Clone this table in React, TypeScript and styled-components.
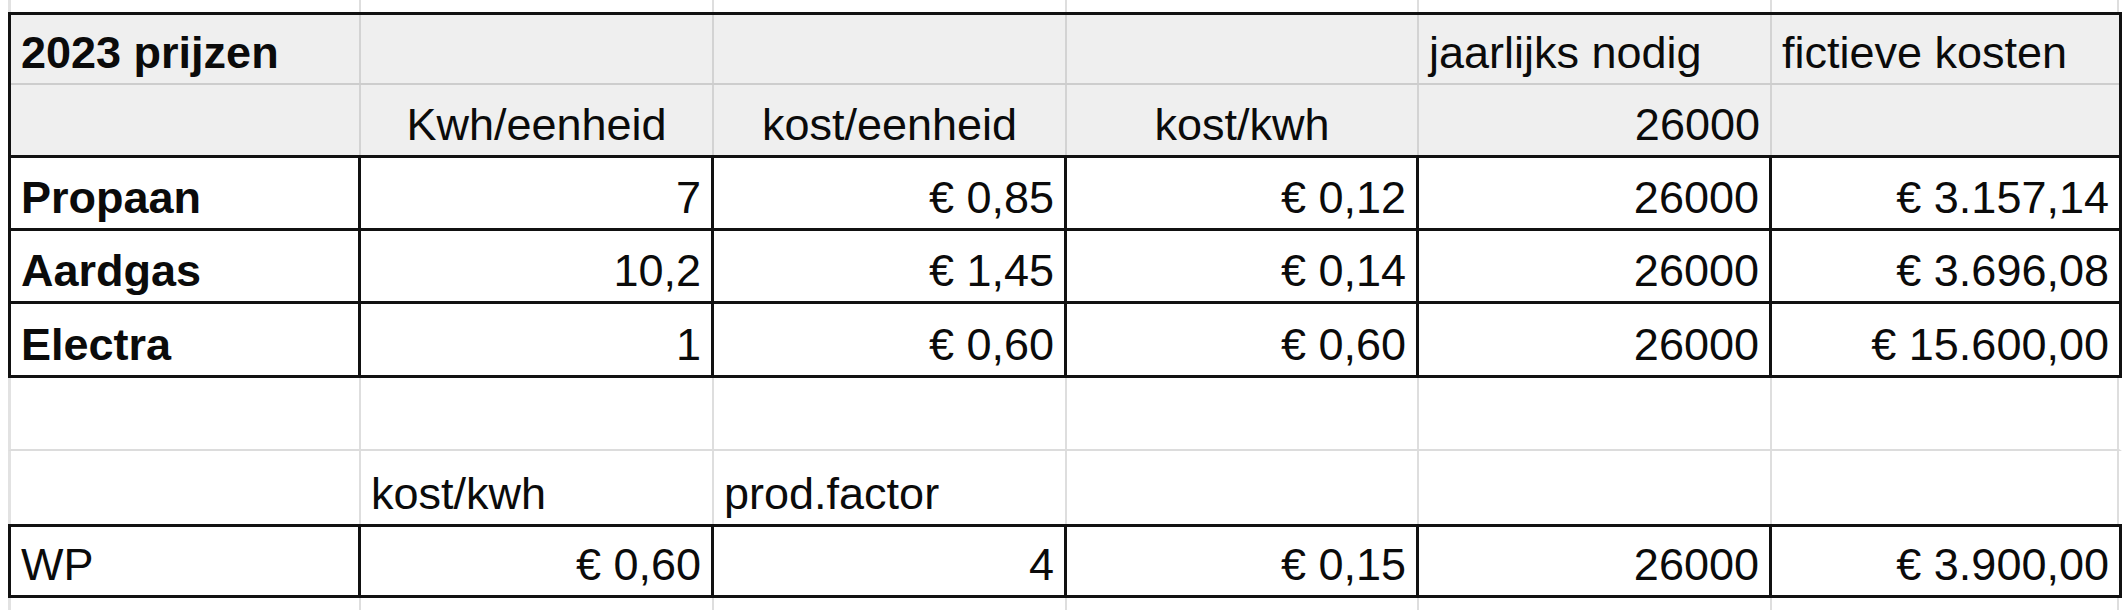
import styled, { createGlobalStyle } from "styled-components";

type Align = "left" | "center" | "right";
type Tone = "header" | "body" | "plain";
type Divider = "soft" | "hard" | "grid" | "none";

type CellData = { text?: string; align?: Align; bold?: boolean };

// column widths include each cell's right border, so lines land on the sheet grid
const COLUMNS = "350px 353px 353px 352px 353px 347px";

const headerRows: CellData[][] = [
  [
    { text: "2023 prijzen", bold: true },
    {},
    {},
    {},
    { text: "jaarlijks nodig" },
    { text: "fictieve kosten" },
  ],
  [
    {},
    { text: "Kwh/eenheid", align: "center" },
    { text: "kost/eenheid", align: "center" },
    { text: "kost/kwh", align: "center" },
    { text: "26000", align: "right" },
    {},
  ],
];

const fuels = [
  { name: "Propaan", perUnit: "7", unitCost: "€ 0,85", kwhCost: "€ 0,12", need: "26000", total: "€ 3.157,14" },
  { name: "Aardgas", perUnit: "10,2", unitCost: "€ 1,45", kwhCost: "€ 0,14", need: "26000", total: "€ 3.696,08" },
  { name: "Electra", perUnit: "1", unitCost: "€ 0,60", kwhCost: "€ 0,60", need: "26000", total: "€ 15.600,00" },
];

const blankRow: CellData[] = [{}, {}, {}, {}, {}, {}];

const pumpLabels: CellData[] = [{}, { text: "kost/kwh" }, { text: "prod.factor" }, {}, {}, {}];

const pumpRow: CellData[] = [
  { text: "WP" },
  { text: "€ 0,60", align: "right" },
  { text: "4", align: "right" },
  { text: "€ 0,15", align: "right" },
  { text: "26000", align: "right" },
  { text: "€ 3.900,00", align: "right" },
];

const justify: Record<Align, string> = {
  left: "flex-start",
  center: "center",
  right: "flex-end",
};

const dividers: Record<Divider, string> = {
  soft: "2px solid #cdcdcd",
  hard: "3px solid #111111",
  grid: "2px solid #dcdcdc",
  none: "0",
};

const cellLines: Record<Tone, string> = {
  header: "2px solid #d3d3d3",
  body: "3px solid #111111",
  plain: "2px solid #dedede",
};

const GlobalStyle = createGlobalStyle`
  html, body {
    margin: 0;
    padding: 0;
    background: #ffffff;
  }
  body {
    font-family: "Liberation Sans", Arial, sans-serif;
    color: #0b0b0b;
  }
`;

const Sheet = styled.div`
  display: flex;
  flex-direction: column;
  width: 2126px;
  height: 610px;
  padding-left: 8px;
  box-sizing: border-box;
  overflow: hidden;
`;

const Table = styled.div`
  width: max-content;
  border: 3px solid #111111;
`;

const Row = styled.div<{ $height: number; $divider: Divider; $fill?: boolean }>`
  display: grid;
  grid-template-columns: ${COLUMNS};
  height: ${({ $height }) => $height}px;
  box-sizing: border-box;
  background: ${({ $fill }) => ($fill ? "#efefef" : "#ffffff")};
  border-bottom: ${({ $divider }) => dividers[$divider]};
`;

// loose spreadsheet rows outside the bordered tables
const GridRow = styled(Row)`
  width: max-content;
  border-left: 3px solid #e2e2e2;
  border-right: 3px solid transparent;
`;

const Cell = styled.div<{ $align: Align; $bold?: boolean; $tone: Tone; $last?: boolean }>`
  display: flex;
  align-items: flex-end;
  justify-content: ${({ $align }) => justify[$align]};
  min-width: 0;
  padding: 0 10px 8px;
  box-sizing: border-box;
  font-size: 45px;
  line-height: 45px;
  font-weight: ${({ $bold }) => ($bold ? 700 : 400)};
  white-space: nowrap;
  overflow: hidden;
  border-right: ${({ $tone, $last }) =>
    $last && $tone !== "plain" ? "0" : cellLines[$tone]};
`;

function Cells({ cells, tone }: { cells: CellData[]; tone: Tone }) {
  return (
    <>
      {cells.map((c, i) => (
        <Cell
          key={i}
          $align={c.align ?? "left"}
          $bold={c.bold}
          $tone={tone}
          $last={i === cells.length - 1}
        >
          {c.text}
        </Cell>
      ))}
    </>
  );
}

function App() {
  const bodyHeights = [73, 73, 71];

  return (
    <>
      <GlobalStyle />
      <Sheet>
        <GridRow $height={12} $divider="none">
          <Cells cells={blankRow} tone="plain" />
        </GridRow>

        <Table>
          <Row $height={70} $divider="soft" $fill>
            <Cells cells={headerRows[0]} tone="header" />
          </Row>
          <Row $height={73} $divider="hard" $fill>
            <Cells cells={headerRows[1]} tone="header" />
          </Row>
          {fuels.map((f, i) => (
            <Row
              key={f.name}
              $height={bodyHeights[i]}
              $divider={i === fuels.length - 1 ? "none" : "hard"}
            >
              <Cells
                tone="body"
                cells={[
                  { text: f.name, bold: true },
                  { text: f.perUnit, align: "right" },
                  { text: f.unitCost, align: "right" },
                  { text: f.kwhCost, align: "right" },
                  { text: f.need, align: "right" },
                  { text: f.total, align: "right" },
                ]}
              />
            </Row>
          ))}
        </Table>

        <GridRow $height={73} $divider="grid">
          <Cells cells={blankRow} tone="plain" />
        </GridRow>
        <GridRow $height={73} $divider="none">
          <Cells cells={pumpLabels} tone="plain" />
        </GridRow>

        <Table>
          <Row $height={68} $divider="none">
            <Cells cells={pumpRow} tone="body" />
          </Row>
        </Table>

        <GridRow $height={12} $divider="none">
          <Cells cells={blankRow} tone="plain" />
        </GridRow>
      </Sheet>
    </>
  );
}

export default App;
